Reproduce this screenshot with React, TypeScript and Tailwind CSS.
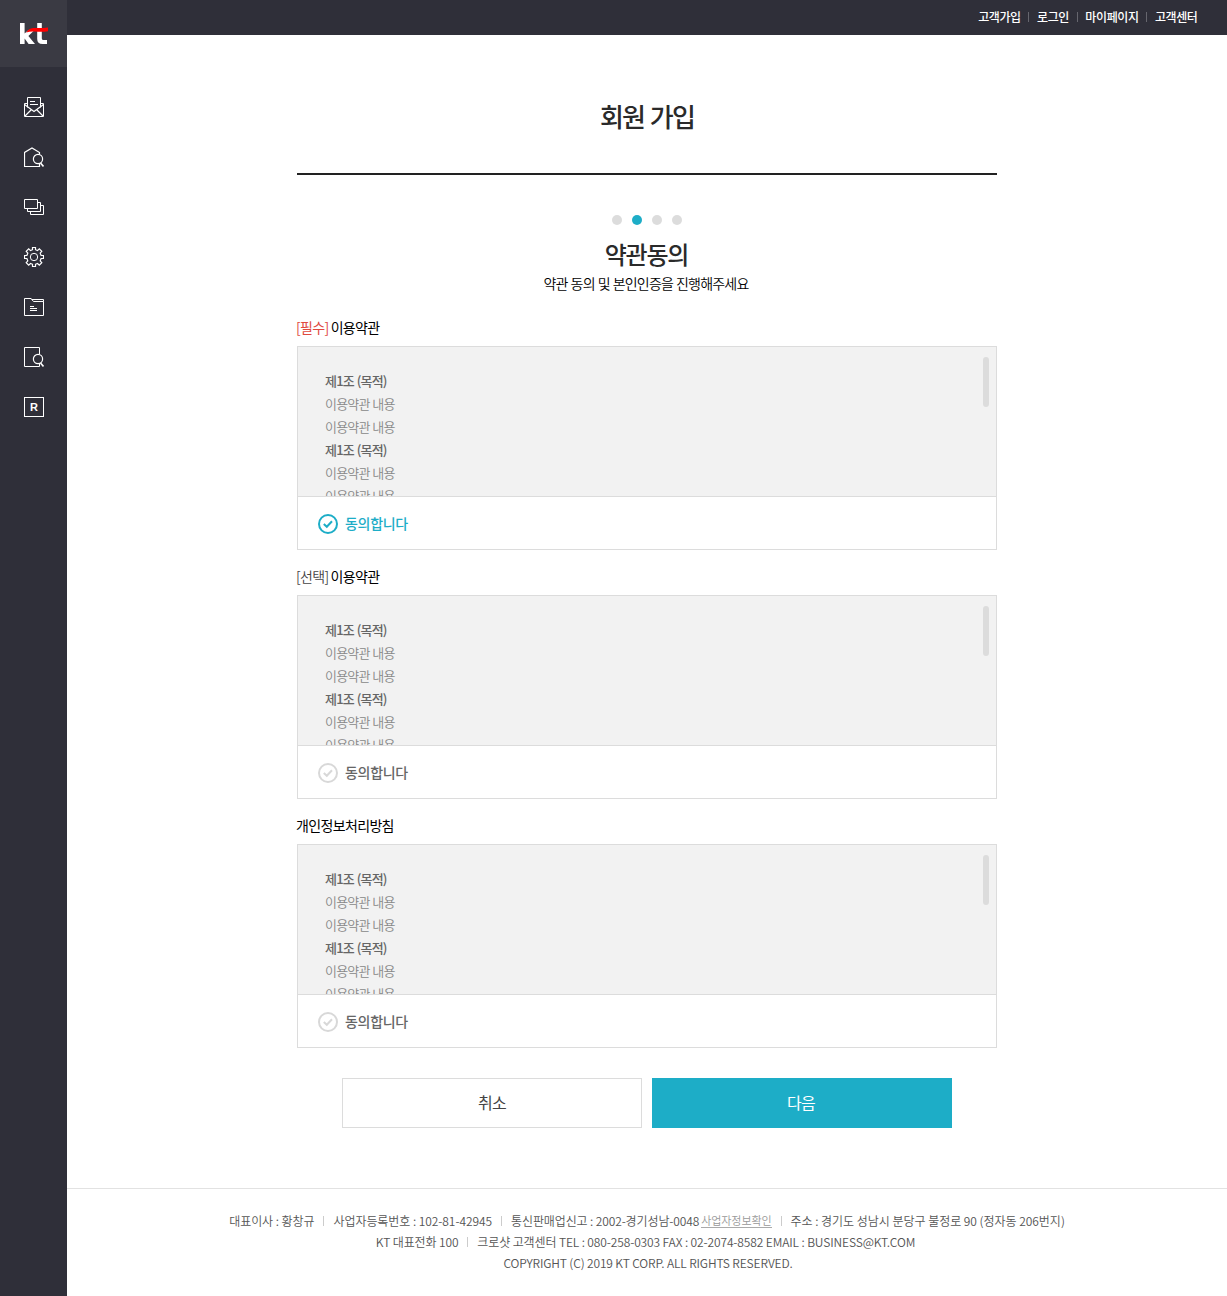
import type { ReactNode } from 'react';

const topLinks = ['고객가입', '로그인', '마이페이지', '고객센터'];

function Icon({ children }: { children: ReactNode }) {
  return (
    <svg width="20" height="20" viewBox="0 0 20 20" fill="none" stroke="#fff" className="block">
      {children}
    </svg>
  );
}

function SideNav() {
  return (
    <aside className="w-[67px] shrink-0 bg-[#2f2f39]">
      <div className="flex h-[67px] items-center justify-center bg-[#3a3a43] pr-px">
        <svg width="30" height="24" viewBox="0 0 30 24" fill="none" className="block">
          <path d="M2 1h4.600v10.500L10.600 8h6l-6.200 6 6.600 8h-6.400l-4-5.400V22H2z" fill="#fff" />
          <path d="M19.200 1h4.600v15c0 1.500.6 2 1.800 2H29v4h-4.400c-3.600 0-5.400-1.600-5.400-5z" fill="#fff" />
          <path d="M8.200 10.500c1.800-2.600 3.600-4.500 7-4.600 5 .1 9 .5 14.800-.5v3.800c-4.800 1-9.500.6-13.500.3-3.200-.2-6 .2-8.300 1z" fill="#f00" />
        </svg>
      </div>
      <nav className="flex flex-col items-center gap-[30px] pt-[30px] pl-px">
        <Icon>
          <path d="M3.500 10.500V.5h13v10" />
          <path d="M3.500 6.500h-3v13h19v-13h-3M6 4.500h5M6 7.500h8" />
          <path d="M.5 7.500l9.500 7 9.500-7M1 19l6.500-6.500M19 19l-6.500-6.500" strokeWidth="1.200" />
        </Icon>
        <Icon>
          <path d="M15.500 16v3.500H.5V5.500L8 .9l7.500 4.600v2" strokeWidth="1.200" />
          <circle cx="14" cy="12" r="4.600" strokeWidth="1.200" />
          <path d="M16.500 16l3 3.500" strokeWidth="1.600" />
        </Icon>
        <Icon>
          <path d="M.5 2.500h13v9H.5zM13.500 5.500h3v9h-13v-3M16.500 8.500h3v9h-13v-3" />
        </Icon>
        <Icon>
          <path
            d="M8.500.5h3v2.200l2 .9 1.800-1.800 2.500 2.500L16.200 6.200l.9 2.300h2.400v3h-2.400l-.9 2.300 1.600 1.900-2.500 2.500-1.800-1.700-2 .8v2.200h-3v-2.200l-2-.8-1.800 1.700-2.500-2.500 1.600-1.900-.9-2.300H.5v-3h2.400l.9-2.300L2.200 4.300l2.500-2.500 1.800 1.800 2-.9z"
            strokeWidth="1.200"
          />
          <circle cx="10" cy="10" r="3.700" />
        </Icon>
        <Icon>
          <path d="M.5 1.500H7l2.500 3h10v14H.5zM7 1.500l1 1h11.500v2M6 9.500h4M6 11.500h7M6 13.500h7" />
        </Icon>
        <Icon>
          <path d="M15.500 7V.5H.5v19h15V16" />
          <circle cx="14" cy="12" r="4.600" strokeWidth="1.200" />
          <path d="M16.500 16l3 3.500" strokeWidth="1.600" />
        </Icon>
        <div className="flex size-5 items-center justify-center border border-white font-['Liberation_Sans'] text-[11px] leading-none font-bold tracking-normal text-white">
          R
        </div>
      </nav>
    </aside>
  );
}

function Terms({ tag, tagClass, title, checked = false }: { tag?: string; tagClass?: string; title: string; checked?: boolean }) {
  return (
    <section className="mb-[9px]">
      <h3 className="-ml-[1px] flex h-9 items-center gap-[2px] pb-[3px] text-[14px] leading-5 font-normal tracking-[-0.65px] text-black">
        {tag && <span className={tagClass}>{tag}</span>}
        <span>{title}</span>
      </h3>
      <div className="h-[204px] border border-[#dcdcdc]">
        <div className="relative h-[150px] overflow-hidden border-b border-[#dcdcdc] bg-[#f2f2f2] pt-[22px] pl-[27px] text-[13px] leading-[23px] text-[#888] [word-spacing:0.6px]">
          {[0, 1].map((i) => (
            <div key={i}>
              <p className="font-medium text-[#666]">제1조 (목적)</p>
              <p className="font-[350]">이용약관 내용</p>
              <p className="font-[350]">이용약관 내용</p>
            </div>
          ))}
          <div className="absolute top-[10px] right-[7px] h-[50px] w-[6px] rounded-full bg-[#dcdcdc]" />
        </div>
        <label className={`flex h-[52px] items-center gap-[7px] pt-px pl-5 text-[14px] font-medium tracking-[-0.3px] ${checked ? 'text-[#1dadc7]' : 'text-[#666]'}`}>
          <svg width="20" height="20" viewBox="0 0 20 20" fill="none" strokeWidth="2" className={checked ? 'stroke-[#1dadc7]' : 'stroke-[#d8d8d8]'}>
            <circle cx="10" cy="10" r="9" />
            <path d="M5.800 10l3 2.800 5.200-5.600" />
          </svg>
          <span className="pb-px">동의합니다</span>
        </label>
      </div>
    </section>
  );
}

function Bar() {
  return <i className="mx-[9px] h-[10px] w-px bg-[#ccc]" />;
}

export default function App() {
  return (
    <div className="flex h-[1296px] bg-white font-['Noto_Sans_CJK_KR','Noto_Sans',sans-serif] tracking-[-0.05em] text-[#222]">
      <SideNav />
      <div className="flex min-w-0 flex-1 flex-col">
        <header className="flex h-[35px] shrink-0 items-center justify-end bg-[#2f2f39] pr-[29.5px] pb-px text-[12px] font-medium tracking-[-0.4px] text-white">
          {topLinks.map((t, i) => (
            <div key={t} className="flex items-center">
              {i > 0 && <i className="mx-[7.700px] h-[10px] w-px bg-[#66666e]" />}
              <span>{t}</span>
            </div>
          ))}
        </header>
        <main className="mx-auto w-[700px] flex-1">
          <div className="flex h-[140px] items-center justify-center border-b-2 border-[#222] pt-[24px]">
            <h1 className="text-[26px] leading-9 font-medium tracking-[-1.8px] text-[#2a2a2a] [word-spacing:1.5px]">회원 가입</h1>
          </div>
          <div className="mt-10 flex justify-center gap-[10px]">
            {[0, 1, 2, 3].map((i) => (
              <span key={i} className={`size-[10px] rounded-full ${i === 1 ? 'bg-[#1dadc7]' : 'bg-[#dcdcdc]'}`} />
            ))}
          </div>
          <h2 className="mt-[11px] pr-px text-center text-[24px] leading-9 font-medium tracking-[-1.2px] text-[#2a2a2a]">약관동의</h2>
          <p className="mt-px mb-[17px] pr-[2px] text-center text-[14px] leading-5 font-[350] text-black [word-spacing:0.6px]">
            약관 동의 및 본인인증을 진행해주세요
          </p>
          <Terms tag="[필수]" tagClass="text-[#e04a3f]" title="이용약관" checked />
          <Terms tag="[선택]" tagClass="font-[350] text-[#444]" title="이용약관" />
          <Terms title="개인정보처리방침" />
          <div className="mt-[30px] flex justify-center gap-[10px] text-[16px]">
            <button className="h-[50px] w-[300px] border border-[#dcdcdc] pb-[2px] text-[#444]">취소</button>
            <button className="h-[50px] w-[300px] bg-[#1dadc7] pr-[2px] pb-[2px] text-white">다음</button>
          </div>
        </main>
        <footer className="h-[108px] shrink-0 border-t border-[#e2e2e2] pt-[21px] text-[12px] leading-[21px] font-[350] tracking-[-0.19px] text-[#555]">
          <div className="flex items-center justify-center tracking-[-0.06px]">
            <span>대표이사 : 황창규</span>
            <Bar />
            <span>사업자등록번호 : 102-81-42945</span>
            <Bar />
            <span className="tracking-[-0.12px]">통신판매업신고 : 2002-경기성남-0048</span>
            <a className="ml-[2px] border-b border-[#aaa] text-[11px] leading-[13px] text-[#999]">사업자정보확인</a>
            <Bar />
            <span className="tracking-[-0.03px]">주소 : 경기도 성남시 분당구 불정로 90 (정자동 206번지)</span>
          </div>
          <div className="flex items-center justify-center pr-[3px] tracking-[-0.12px]">
            <span>KT 대표전화 100</span>
            <Bar />
            <span>크로샷 고객센터 TEL : 080-258-0303 FAX : 02-2074-8582 EMAIL : BUSINESS@KT.COM</span>
          </div>
          <p className="pl-[2px] text-center tracking-[-0.14px]">COPYRIGHT (C) 2019 KT CORP. ALL RIGHTS RESERVED.</p>
        </footer>
      </div>
    </div>
  );
}
